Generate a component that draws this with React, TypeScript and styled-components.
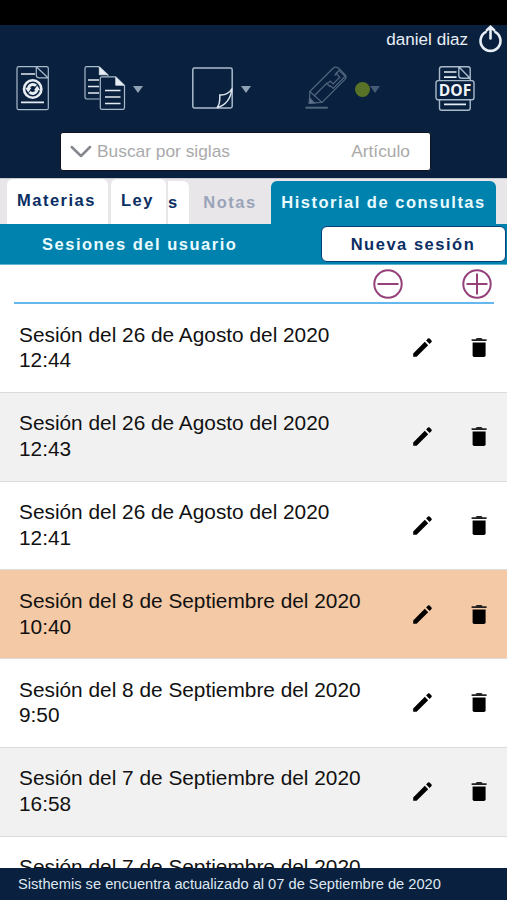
import React from "react";
import styled, { createGlobalStyle } from "styled-components";

const GlobalStyle = createGlobalStyle`
  * { box-sizing: border-box; }
  html, body { margin: 0; padding: 0; background: #fff; overflow: hidden; }
  body { font-family: "Liberation Sans", Arial, Helvetica, sans-serif; }
  button, input { font-family: inherit; }
  svg { display: block; flex: none; }
`;

const Screen = styled.div`
  display: flex;
  flex-direction: column;
  width: 507px;
  height: 900px;
  overflow: hidden;
  background: #fff;
`;

const StatusBar = styled.div`
  flex: none;
  height: 25px;
  background: #000;
`;

const Header = styled.header`
  flex: none;
  display: flex;
  flex-direction: column;
  height: 153px;
  background: #09203e;
`;

const UserBar = styled.div`
  display: flex;
  justify-content: flex-end;
  height: 40px;
  padding-right: 4px;
  color: #e9eff6;
`;

const UserName = styled.span`
  margin-right: 10px;
  font-size: 17.1px;
  line-height: 29px;
`;

const Toolbar = styled.div`
  display: flex;
  align-items: flex-start;
  height: 67px;
  padding-left: 16px;
`;

const Tool = styled.button<{ $gap: number; $faded?: boolean }>`
  display: flex;
  align-items: center;
  height: 47px;
  margin: 0 ${(p) => p.$gap}px 0 0;
  padding: 0;
  border: 0;
  background: none;
  opacity: ${(p) => (p.$faded ? 0.45 : 1)};
`;

const Caret = styled.span<{ $left: number }>`
  margin: 1px 0 0 ${(p) => p.$left}px;
  border: 5px solid transparent;
  border-top: 7px solid #8fa1b4;
  border-bottom: 0;
`;

const ColorDot = styled.span`
  width: 15px;
  height: 15px;
  margin: 1px 0 0 7px;
  border-radius: 50%;
  background: #b8d60c;
`;

const SearchBox = styled.div`
  display: flex;
  align-items: center;
  width: 371px;
  height: 39px;
  margin-left: 60px;
  padding: 0 20px 0 9px;
  border: 1px solid #10141c;
  border-radius: 3px;
  background: #fff;
  color: #a9a9a9;
  font-size: 17.35px;
`;

const SearchLabel = styled.span`
  flex: 1;
  margin-left: 5px;
`;

const Tabs = styled.nav`
  flex: none;
  display: flex;
  align-items: flex-end;
  height: 46px;
  padding-left: 7px;
  border-top: 1px solid #c9c9d1;
  background: #e9e6e9;
`;

const Tab = styled.div<{ $width: number; $kind?: "active" | "muted" | "partial"; $gap?: number }>`
  display: flex;
  align-items: center;
  justify-content: ${(p) => (p.$kind === "partial" ? "flex-start" : "center")};
  width: ${(p) => p.$width}px;
  height: ${(p) => (p.$kind ? 43 : 45)}px;
  margin-right: ${(p) => p.$gap ?? 0}px;
  padding-right: ${(p) => (p.$kind ? 0 : 2)}px;
  padding-bottom: ${(p) => (p.$kind ? 0 : 3)}px;
  border-radius: ${(p) => (p.$kind === "partial" ? "0 6px 0 0" : "6px 6px 0 0")};
  background: ${(p) => (p.$kind === "active" ? "#0082ae" : p.$kind === "muted" ? "transparent" : "#fff")};
  color: ${(p) => (p.$kind === "active" ? "#e9fbff" : p.$kind === "muted" ? "#9aa4b8" : "#0b2e63")};
  font-size: 16.5px;
  font-weight: 700;
  letter-spacing: 1.5px;
  white-space: nowrap;
`;

const SessionBar = styled.div`
  flex: none;
  display: flex;
  align-items: center;
  justify-content: space-between;
  height: 41px;
  padding: 0 1px 0 42px;
  background: #0082ae;
  border-bottom: 1px solid #5db5d2;
`;

const SessionTitle = styled.h1`
  margin: 0;
  color: #e9fbff;
  font-size: 16.5px;
  letter-spacing: 1.52px;
`;

const NewSession = styled.button`
  width: 185px;
  height: 36px;
  padding: 0 1px 0 0;
  border: 1px solid #0b3f79;
  border-radius: 6px;
  background: #fff;
  color: #0b2e63;
  font-size: 16.5px;
  font-weight: 700;
  letter-spacing: 1.52px;
`;

const ZoomBar = styled.div`
  flex: none;
  display: flex;
  justify-content: flex-end;
  gap: 59px;
  height: 39px;
  margin: 0 13px 0 14px;
  padding: 4px 2px 0 0;
  border-bottom: 2px solid #66b7ed;
`;

const List = styled.main`
  flex: 1;
  min-height: 0;
  overflow: hidden;
`;

const Row = styled.div<{ $tone: string }>`
  display: flex;
  align-items: center;
  height: 88.75px;
  padding: 0 18px 0 19px;
  background: ${(p) => p.$tone};
  border-bottom: 1px solid #dcdcdc;
  color: #111;
`;

const RowText = styled.div`
  flex: 1;
  padding-bottom: 1px;
  font-size: 20.83px;
  line-height: 25.7px;
`;

const TimeLine = styled.div`
  height: 25.7px;
`;

const RowActions = styled.div`
  display: flex;
  align-items: center;
  gap: 34px;
`;

const Footer = styled.footer`
  flex: none;
  height: 32px;
  padding-left: 18px;
  background: #09203e;
  color: #dfe8f2;
  font-size: 14.67px;
  line-height: 32px;
  white-space: nowrap;
`;

const line = { fill: "none", stroke: "#a9bacb", strokeWidth: 1.2 } as const;

const LogoutIcon = () => (
  <svg width="25" height="30" viewBox="0 0 25 30" fill="none" stroke="#e9eff6" strokeWidth="2.6" strokeLinecap="round">
    <path d="M7.6 7.2A10 10 0 1 0 17.4 7.2M12.5 13.5V2.2M8.8 5.2L12.5 1.8L16.2 5.2" />
  </svg>
);

const RefreshDocIcon = () => (
  <svg width="34" height="47" viewBox="0 0 34 47" {...line}>
    <rect x="1" y="1.7" width="31.3" height="43" rx="1.8" />
    <path d="M20.3 1.7V10Q20.3 12.8 23.3 12.8H32M20.3 1.7L32 12.8" />
    <path d="M5 9H19M5 37.3H28" stroke="#e3eaf1" strokeWidth="1.7" />
    <circle cx="16.7" cy="24" r="8.7" stroke="#e7edf3" strokeWidth="2.6" />
    <path d="M12.5 23A4.4 4.4 0 0 1 20 20.8M21 25A4.4 4.4 0 0 1 13.5 27" stroke="#e7edf3" strokeWidth="3" />
    <path d="M9.2 22.7H15.4L12.3 27.5ZM18 25.3H24.2L21.2 20.5Z" fill="#e7edf3" stroke="none" />
  </svg>
);

const CopyIcon = () => (
  <svg width="42" height="47" viewBox="0 0 42 47" {...line}>
    <path d="M15 1.7H2.8Q1 1.7 1 3.5V32.3Q1 34 2.8 34H15.5M15 1.7L24 10V11.3" />
    <path d="M31.5 11.8H18Q16.3 11.8 16.3 13.5V42.5Q16.3 44.4 18 44.4H38.7Q40.5 44.4 40.5 42.5V20.5L31.5 11.8" />
    <path d="M15.3 2V9.8H23.5ZM31.7 12.3V20.3H40Z" fill="#e7edf3" stroke="#e7edf3" strokeWidth=".7" />
    <path d="M4 15H15M4 21.5H15M4 28H15M21 25.5H36.5M21 32H36.5M21 38.5H36.5" stroke="#e3eaf1" strokeWidth="1.7" />
  </svg>
);

const NoteIcon = () => (
  <svg width="42" height="47" viewBox="0 0 42 47" {...line} strokeWidth={1.5}>
    <path d="M26 42.9H3.5Q1.8 42.9 1.8 41.2V4.7Q1.8 3 3.5 3H39.5Q41.2 3 41.2 4.7V41.2Q41.2 42.9 39.5 42.9H26" />
    <path d="M26 42.7C29 40 29 35.5 28.8 30Q37 30.5 41 23.5C40 32 35.5 40 26 42.7Z" stroke="#dbe4ed" />
  </svg>
);

const MarkerIcon = () => (
  <svg width="43" height="47" viewBox="0 0 43 47" {...line}>
    <path d="M4.8 26.5L28 3.3Q30.8 .8 33.6 3.3L39.8 9.5Q42.3 12 39.8 14.6L17 37.4Z" />
    <path d="M4.8 26.5L4.3 38.2L17 37.4M9 31L22.5 17.5M29.5 10.5L33 7" />
    <path d="M25.2 21.8L22.3 18.9L25.2 16L28.1 18.9L34.8 12.2L31 8.4L34 5.4L40 11.4L28.2 23.4L25.2 20.4" />
    <path d="M4.3 38.3L4.6 32.8L9.5 37.9Z" fill="#dbe4ed" />
    <path d="M.5 42.7H22.8" strokeWidth="2" />
  </svg>
);

const DofIcon = () => (
  <svg width="40" height="47" viewBox="0 0 40 47" {...line} strokeWidth={1.4}>
    <path d="M4.5 15.5V4Q4.5 1.8 6.7 1.8H33Q35.2 1.8 35.2 4V15.5M23.8 1.8V10.5Q23.8 13.3 26.7 13.3H35M23.8 1.8L35 13.3" />
    <path d="M9 7H21.5M9 12.2H21.5M9 39.3H31" stroke="#e5ecf3" strokeWidth="1.7" />
    <path d="M4.5 34.8V43Q4.5 45.2 6.7 45.2H33Q35.2 45.2 35.2 43V34.8" />
    <rect x="1" y="15.6" width="38" height="19.2" rx="2.2" />
    <text x="20" y="31.2" textAnchor="middle" textLength="32.5" lengthAdjust="spacingAndGlyphs" fill="#f1f5f9" stroke="none" fontSize="16" fontWeight="700" fontFamily="Open Sans, sans-serif">DOF</text>
  </svg>
);

const ChevronIcon = () => (
  <svg width="22" height="14" viewBox="0 0 22 14" fill="none" stroke="#84888c" strokeWidth="2.5" strokeLinecap="round" strokeLinejoin="round">
    <path d="M1.7 2L11 11L20 2" />
  </svg>
);

const CircleIcon = ({ plus = false }: { plus?: boolean }) => (
  <svg width="30" height="30" viewBox="0 0 30 30" fill="none" stroke="#94417a" strokeWidth="2">
    <circle cx="15" cy="15" r="13.7" />
    <path d={plus ? "M4.5 15H25.5M15 4.5V25.5" : "M4.5 15H25.5"} />
  </svg>
);

const PencilIcon = () => (
  <svg width="25" height="25" viewBox="0 0 25 25" fill="#000">
    <path d="M3.2 18.4L14.8 6.8L18.2 10.2L6.6 21.8H3.2ZM16.1 5.5L18 3.6Q18.8 2.9 19.6 3.6L21.5 5.5Q22.2 6.3 21.5 7.1L19.6 9Z" />
  </svg>
);

const TrashIcon = () => (
  <svg width="20" height="25" viewBox="0 0 20 25" fill="#000">
    <path d="M3.6 7.6H16.6V20.3Q16.6 22 14.9 22H5.3Q3.6 22 3.6 20.3Z" />
    <path d="M2.6 4.2H6.6L7.8 3H12.4L13.6 4.2H17.6V6H2.6Z" fill="#222" />
  </svg>
);

const WHITE = "#ffffff";
const GRAY = "#f1f1f1";
const SELECTED = "#f4c9a5";

const sessions = [
  { day: "26 de Agosto", time: "12:44", tone: WHITE },
  { day: "26 de Agosto", time: "12:43", tone: GRAY },
  { day: "26 de Agosto", time: "12:41", tone: WHITE },
  { day: "8 de Septiembre", time: "10:40", tone: SELECTED },
  { day: "8 de Septiembre", time: "9:50", tone: WHITE },
  { day: "7 de Septiembre", time: "16:58", tone: GRAY },
  { day: "7 de Septiembre", time: "", tone: WHITE },
];

export default function App() {
  return (
    <>
      <GlobalStyle />
      <Screen>
        <StatusBar />
        <Header>
          <UserBar>
            <UserName>daniel diaz</UserName>
            <LogoutIcon />
          </UserBar>
          <Toolbar>
            <Tool $gap={34}><RefreshDocIcon /></Tool>
            <Tool $gap={48}><CopyIcon /><Caret $left={7} /></Tool>
            <Tool $gap={54}><NoteIcon /><Caret $left={8} /></Tool>
            <Tool $gap={55} $faded><MarkerIcon /><ColorDot /><Caret $left={0} /></Tool>
            <Tool $gap={0}><DofIcon /></Tool>
          </Toolbar>
          <SearchBox>
            <ChevronIcon />
            <SearchLabel>Buscar por siglas</SearchLabel>
            <span>Artículo</span>
          </SearchBox>
        </Header>
        <Tabs>
          <Tab $width={101} $gap={3}>Materias</Tab>
          <Tab $width={55} $gap={2}>Ley</Tab>
          <Tab $width={21} $kind="partial">s</Tab>
          <Tab $width={82} $kind="muted">Notas</Tab>
          <Tab $width={225} $kind="active">Historial de consultas</Tab>
        </Tabs>
        <SessionBar>
          <SessionTitle>Sesiones del usuario</SessionTitle>
          <NewSession>Nueva sesión</NewSession>
        </SessionBar>
        <ZoomBar>
          <CircleIcon />
          <CircleIcon plus />
        </ZoomBar>
        <List>
          {sessions.map((s, i) => (
            <Row key={i} $tone={s.tone}>
              <RowText>
                Sesión del {s.day} del 2020
                <TimeLine>{s.time}</TimeLine>
              </RowText>
              <RowActions>
                <PencilIcon />
                <TrashIcon />
              </RowActions>
            </Row>
          ))}
        </List>
        <Footer>Sisthemis se encuentra actualizado al 07 de Septiembre de 2020</Footer>
      </Screen>
    </>
  );
}
